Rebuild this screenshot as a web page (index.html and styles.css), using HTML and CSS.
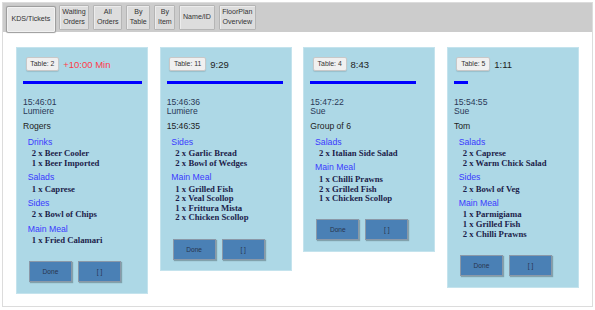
FILE: index.html
```html
<!DOCTYPE html>
<html>
<head>
<meta charset="utf-8">
<link rel="stylesheet" href="styles.css">
</head>
<body>
<div class="frame">
  <nav class="tabs">
    <button class="tab active">KDS/Tickets</button>
    <button class="tab">Waiting<br>Orders</button>
    <button class="tab">All<br>Orders</button>
    <button class="tab">By<br>Table</button>
    <button class="tab">By<br>Item</button>
    <button class="tab">Name/ID</button>
    <button class="tab">FloorPlan<br>Overview</button>
  </nav>
  <main class="tickets">
    <section class="card">
      <div class="head"><span class="table-btn">Table: 2</span><span class="elapsed late">+10:00 Min</span></div>
      <div class="progress" style="width:119px"></div>
      <div class="info">15:46:01<br>Lumiere</div>
      <div class="name">Rogers</div>
      <div class="group"><div class="cat">Drinks</div><div class="items">2 x Beer Cooler<br>1 x Beer Imported</div></div>
      <div class="group"><div class="cat">Salads</div><div class="items">1 x Caprese</div></div>
      <div class="group"><div class="cat">Sides</div><div class="items">2 x Bowl of Chips</div></div>
      <div class="group"><div class="cat">Main Meal</div><div class="items">1 x Fried Calamari</div></div>
      <div class="actions"><button class="act">Done</button><button class="act">[ ]</button></div>
    </section>
    <section class="card">
      <div class="head"><span class="table-btn">Table: 11</span><span class="elapsed">9:29</span></div>
      <div class="progress" style="width:116px"></div>
      <div class="info">15:46:36<br>Lumiere</div>
      <div class="name">15:46:35</div>
      <div class="group"><div class="cat">Sides</div><div class="items">2 x Garlic Bread<br>2 x Bowl of Wedges</div></div>
      <div class="group"><div class="cat">Main Meal</div><div class="items">1 x Grilled Fish<br>2 x Veal Scollop<br>1 x Frittura Mista<br>2 x Chicken Scollop</div></div>
      <div class="actions"><button class="act">Done</button><button class="act">[ ]</button></div>
    </section>
    <section class="card">
      <div class="head"><span class="table-btn">Table: 4</span><span class="elapsed">8:43</span></div>
      <div class="progress" style="width:106px"></div>
      <div class="info">15:47:22<br>Sue</div>
      <div class="name">Group of 6</div>
      <div class="group"><div class="cat">Salads</div><div class="items">2 x Italian Side Salad</div></div>
      <div class="group"><div class="cat">Main Meal</div><div class="items">1 x Chilli Prawns<br>2 x Grilled Fish<br>1 x Chicken Scollop</div></div>
      <div class="actions"><button class="act">Done</button><button class="act">[ ]</button></div>
    </section>
    <section class="card">
      <div class="head"><span class="table-btn">Table: 5</span><span class="elapsed">1:11</span></div>
      <div class="progress" style="width:14px"></div>
      <div class="info">15:54:55<br>Sue</div>
      <div class="name">Tom</div>
      <div class="group"><div class="cat">Salads</div><div class="items">2 x Caprese<br>2 x Warm Chick Salad</div></div>
      <div class="group"><div class="cat">Sides</div><div class="items">2 x Bowl of Veg</div></div>
      <div class="group"><div class="cat">Main Meal</div><div class="items">1 x Parmigiama<br>1 x Grilled Fish<br>2 x Chilli Prawns</div></div>
      <div class="actions"><button class="act">Done</button><button class="act">[ ]</button></div>
    </section>
  </main>
</div>
</body>
</html>
```

FILE: styles.css
```css
* { box-sizing: border-box; }
html, body { margin: 0; padding: 0; background: #fff; }
body { font-family: "Liberation Sans", Arial, sans-serif; }

.frame {
  margin: 2px 0 0 2px;
  width: 591px;
  height: 305px;
  border: 1px solid #dcdcdc;
  background: #fff;
}

.tabs {
  height: 29px;
  background: #cccccc;
  display: flex;
  align-items: flex-start;
  gap: 4px;
  padding-left: 4px;
}

.tab {
  margin: 2px 0 0 0;
  height: 25px;
  padding: 0 2.6px;
  font-family: "Liberation Sans", Arial, sans-serif;
  font-size: 7.1px;
  line-height: 9.5px;
  color: #333;
  background: #dddddd;
  border: 1px solid #b5b5b5;
  border-radius: 1px;
  box-shadow: inset 1px 1px 0 #ececec;
}
.tab.active {
  margin-top: 4px;
  padding: 0 3.5px;
  background: #e6e6e6;
  border: 1px solid #f2f2f2;
  box-shadow: 0 0 1px 1px #9a9a9a;
}

.tickets {
  display: flex;
  align-items: flex-start;
  gap: 11.67px;
  padding: 15px 0 0 13px;
}

.card {
  width: 132px;
  flex: none;
  background: #add8e6;
  border: 1px solid #c4e3ed;
  padding: 9px 5px 10.8px 6px;
}

.head {
  display: flex;
  align-items: center;
  gap: 4px;
  margin-left: 2.5px;
  height: 14px;
}
.table-btn {
  display: inline-block;
  height: 14px;
  line-height: 12px;
  padding: 0 3.8px;
  font-size: 6.9px;
  color: #333;
  background: #f0f0f0;
  border: 1px solid #c8c8c8;
  border-radius: 2px;
  box-shadow: 0 1px 1px rgba(0,0,0,0.12);
}
.elapsed {
  font-size: 9.5px;
  color: #222;
}
.elapsed.late { color: #ff3a4a; }

.progress {
  height: 3px;
  background: #0000ff;
  margin-top: 10px;
}

.info {
  margin-top: 13.5px;
  font-size: 8.6px;
  line-height: 9px;
  color: #2b3957;
}
.name {
  margin-top: 6.5px;
  font-size: 8.6px;
  line-height: 9px;
  color: #222;
  margin-bottom: 5.7px;
}

.group { margin-bottom: 3.6px; }
.cat {
  margin-left: 4.7px;
  font-size: 8.7px;
  line-height: 10px;
  color: #3a3aff;
  margin-bottom: 2.6px;
}
.items {
  margin-left: 8.7px;
  font-family: "Liberation Serif", "Times New Roman", serif;
  font-weight: bold;
  font-size: 8.7px;
  line-height: 9.6px;
  color: #1c1d4a;
}

.actions {
  display: flex;
  gap: 6px;
  margin: 15.5px 0 0 6px;
}
.act {
  width: 43px;
  height: 21px;
  padding: 0;
  font-family: "Liberation Sans", Arial, sans-serif;
  font-size: 6.6px;
  color: #28344e;
  background: #4a80b5;
  border: 1px solid #8a98a8;
  box-shadow: 1px 1px 1px rgba(0,0,0,0.25);
}
```
